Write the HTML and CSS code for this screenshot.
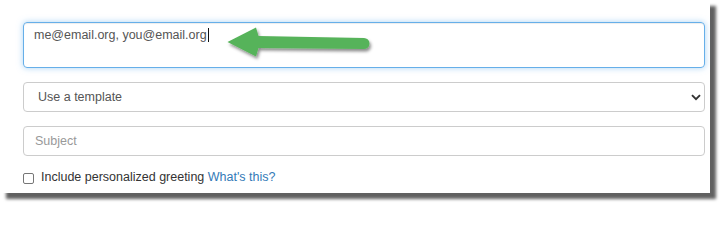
FILE: index.html
```html
<!DOCTYPE html>
<html>
<head>
<meta charset="utf-8">
<link rel="stylesheet" href="styles.css">
</head>
<body>
<div class="page">
  <div class="card">
    <div class="form">
      <div class="field-wrap">
        <div class="textarea">me@email.org, you@email.org<span class="caret"></span></div>
        <svg class="arrow" width="160" height="50" viewBox="220 20 160 50">
          <defs>
            <filter id="sh" x="-10%" y="-30%" width="130%" height="180%">
              <feDropShadow dx="1.5" dy="2.5" stdDeviation="1.6" flood-color="#000" flood-opacity="0.45"/>
            </filter>
          </defs>
          <path filter="url(#sh)" fill="#57b35a" d="M227.5,42 L256,27.5 L258.5,36 L364,38 A5.5,5.5 0 0 1 364,49 L258.5,48 L256,56.5 Z"/>
        </svg>
      </div>
      <div class="select">
        <span>Use a template</span>
        <svg class="chev" width="10" height="7" viewBox="0 0 10 7"><path d="M1,1.2 L5,5.2 L9,1.2" fill="none" stroke="#333" stroke-width="1.9"/></svg>
      </div>
      <div class="input"><span class="placeholder">Subject</span></div>
      <div class="check-row">
        <span class="checkbox"></span>
        <span class="label">Include personalized greeting <a class="link" href="#">What's this?</a></span>
      </div>
    </div>
  </div>
</div>
</body>
</html>
```
FILE: styles.css
```css
html, body {
  margin: 0;
  padding: 0;
  background: #ffffff;
}
body {
  font-family: "Liberation Sans", Arial, sans-serif;
  font-size: 12.5px;
  color: #333;
}
.page {
  width: 726px;
  height: 209px;
  overflow: hidden;
}
.card {
  width: 710px;
  height: 193px;
  background: #fff;
  box-shadow: 6px 6px 3px rgba(0, 0, 0, 0.62);
  box-sizing: border-box;
  padding: 22px 5px 0 23px;
}
.form {
  display: flex;
  flex-direction: column;
}
.field-wrap {
  position: relative;
}
.textarea {
  box-sizing: border-box;
  height: 46px;
  border: 1px solid #66afe9;
  border-radius: 4px;
  box-shadow: inset 0 1px 1px rgba(0,0,0,.075), 0 0 6px rgba(102,175,233,.55);
  padding: 3px 10px;
  line-height: 18px;
  color: #555;
}
.caret {
  display: inline-block;
  width: 1px;
  height: 14px;
  background: #111;
  vertical-align: -3px;
  margin-left: 1px;
}
.arrow {
  position: absolute;
  left: 197px;
  top: -2px;
}
.select {
  margin-top: 14px;
  box-sizing: border-box;
  height: 30px;
  border: 1px solid #ccc;
  border-radius: 4px;
  display: flex;
  align-items: center;
  justify-content: space-between;
  padding: 0 3px 0 14px;
  color: #555;
}
.chev {
  display: block;
}
.input {
  margin-top: 14px;
  box-sizing: border-box;
  height: 30px;
  border: 1px solid #ccc;
  border-radius: 4px;
  display: flex;
  align-items: center;
  padding: 0 11px;
}
.placeholder {
  color: #999;
}
.check-row {
  margin-top: 12px;
  display: flex;
  align-items: center;
  height: 18px;
}
.checkbox {
  box-sizing: border-box;
  width: 11px;
  height: 11px;
  border: 1px solid #767676;
  border-radius: 2px;
  margin-top: 2px;
  margin-right: 7px;
  background: #fff;
}
.label {
  color: #333;
  line-height: 18px;
}
.link {
  color: #337ab7;
  text-decoration: none;
}
```
